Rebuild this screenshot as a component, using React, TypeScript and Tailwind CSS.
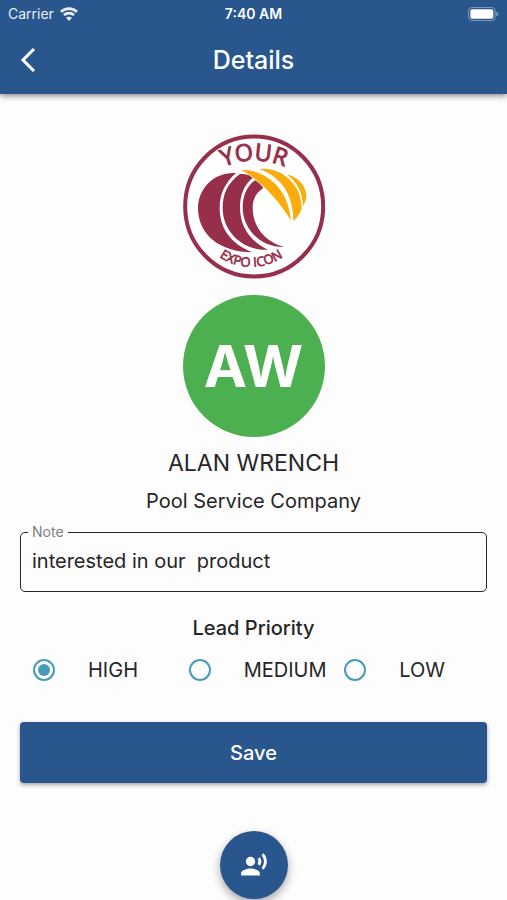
import { useState } from "react";
import { MdRecordVoiceOver } from "react-icons/md";

const PRIORITIES = ["HIGH", "MEDIUM", "LOW"];

function WifiIcon() {
  return (
    <svg className="h-[14px] w-[18px]" viewBox="0 0 54 42" fill="none" stroke="currentColor" strokeWidth="8">
      <path d="M3 14.5C16 1.5 38 1.5 51 14.5" />
      <path d="M12 24.500C20 16.500 34 16.500 42 24.500" />
      <path d="M18 32.500C23 28 31 28 36 32.500L27 42Z" fill="currentColor" stroke="none" />
    </svg>
  );
}

function BatteryIcon() {
  return (
    <svg className="h-[14px] w-[31px]" viewBox="0 0 93 42" fill="none">
      <rect x="1.5" y="1.5" width="80" height="39" rx="10" stroke="currentColor" strokeOpacity="0.4" strokeWidth="3" />
      <rect x="7" y="7" width="69" height="28" rx="5" fill="currentColor" />
      <path d="M85 14c8 3 8 11 0 14z" fill="currentColor" fillOpacity="0.45" />
    </svg>
  );
}

function ExpoLogo() {
  return (
    <svg className="h-[145px] w-[142px]" viewBox="27 25 426 435" role="img" aria-label="Your expo icon">
      <ellipse cx="240.500" cy="242.500" rx="207" ry="210" fill="#fff" stroke="#982f4a" strokeWidth="12" />
      <g fill="#982f4a">
        <path d="M186 142C126 137 72 184 72 247C72 328 139 379 235 380C166 352 137 304 137 247C137 203 155 169 186 142Z" />
        <path d="M198 145C222 145 229 150 236 157C209 179 198 209 198 245C198 302 227 346 282 372C202 375 146 315 146 247C146 203 162 171 198 145Z" />
        <path d="M243 164C254 169 260 177 268 187C246 201 236 221 236 246C236 302 272 349 331 364C258 366 206 309 206 245C206 210 219 181 243 164Z" />
      </g>
      <g fill="#fbab0b">
        <path d="M202 132C265 132 342 176 351 285C315 225 265 169 202 132Z" />
        <path d="M256 130C318 122 384 173 383 249C378 264 369 276 358 286C359 212 325 155 256 130Z" />
        <path d="M339 147C380 153 407 198 394 227L387 242C386 202 371 170 339 147Z" />
      </g>
      <path id="logo-top" d="M110 144A234 234 0 0 1 370 144" fill="none" />
      <path id="logo-bottom" d="M92 350A170 170 0 0 0 372 350" fill="none" />
      <g fill="#982f4a" stroke="#982f4a" textAnchor="middle" className="font-['Open_Sans',sans-serif]">
        <text fontSize="70" strokeWidth="3">
          <textPath href="#logo-top" startOffset="50%">YOUR</textPath>
        </text>
        <text fontSize="39" strokeWidth="2">
          <textPath href="#logo-bottom" startOffset="50%">EXPO ICON</textPath>
        </text>
      </g>
    </svg>
  );
}

export default function App() {
  const [note, setNote] = useState("interested in our  product");
  const [priority, setPriority] = useState("HIGH");

  return (
    <div className="min-h-screen bg-[#fdfdfd] font-[Inter,sans-serif] text-[#262626]">
      <header className="bg-[#29568d] text-white shadow-[0_2px_6px_rgba(0,0,0,0.45)]">
        <div className="grid h-7 grid-cols-3 items-center px-2 text-sm">
          <div className="flex items-center gap-1.5 text-white/90">
            <span>Carrier</span>
            <WifiIcon />
          </div>
          <span className="text-center font-semibold">7:40 AM</span>
          <div className="flex justify-end">
            <BatteryIcon />
          </div>
        </div>
        <div className="grid h-[66px] grid-cols-[56px_1fr_56px] items-center pb-0.5">
          <button type="button" aria-label="Back" className="flex h-14 items-center justify-center">
            <svg className="h-6 w-4" viewBox="0 0 16 24" fill="none" stroke="currentColor" strokeWidth="3">
              <path d="M14 1L3 12L14 23" />
            </svg>
          </button>
          <h1 className="text-center text-[25px] leading-8 font-medium">Details</h1>
        </div>
      </header>

      <main className="flex flex-col items-center px-5 pt-10">
        <ExpoLogo />
        <div className="mt-4 flex h-[142px] w-[142px] items-center justify-center rounded-full bg-[#4caf50] text-[58px] font-bold text-white">
          AW
        </div>
        <h2 className="mt-2 text-[23px] leading-9">ALAN WRENCH</h2>
        <p className="mt-1 text-xl leading-8">Pool Service Company</p>

        <fieldset className="mt-[5px] w-full rounded-[5px] border border-[#262626] px-[7px]">
          <legend className="px-1 text-sm leading-5 text-[#808080]">
            <label htmlFor="note">Note</label>
          </legend>
          <textarea
            id="note"
            rows={1}
            value={note}
            onChange={(e) => setNote(e.target.value)}
            className="block h-[49px] w-full resize-none px-1 pt-[5px] text-xl leading-7 outline-none"
          />
        </fieldset>

        <h3 id="priority-title" className="mt-5 text-xl leading-8 font-medium">Lead Priority</h3>
        <div role="radiogroup" aria-labelledby="priority-title" className="mt-0.5 grid w-full grid-cols-3">
          {PRIORITIES.map((p) => (
            <label key={p} className="flex h-12 items-center gap-5 text-xl">
              <span className="flex w-12 justify-center">
                <input
                  type="radio"
                  name="priority"
                  value={p}
                  checked={priority === p}
                  onChange={() => setPriority(p)}
                  className="flex h-[22px] w-[22px] appearance-none items-center justify-center rounded-full border-2 border-[#479cb9] before:h-3 before:w-3 before:rounded-full checked:before:bg-[#479cb9]"
                />
              </span>
              {p}
            </label>
          ))}
        </div>

        <button
          type="button"
          className="mt-7 h-[61px] w-full rounded bg-[#29568d] text-xl font-medium text-white shadow-[0_2px_4px_rgba(0,0,0,0.35)]"
        >
          Save
        </button>
        <button
          type="button"
          aria-label="Record voice note"
          className="mt-12 flex h-[68px] w-[68px] items-center justify-center rounded-full bg-[#29568d] text-white shadow-[0_4px_10px_rgba(0,0,0,0.35)]"
        >
          <MdRecordVoiceOver className="h-7 w-7" />
        </button>
      </main>
    </div>
  );
}
